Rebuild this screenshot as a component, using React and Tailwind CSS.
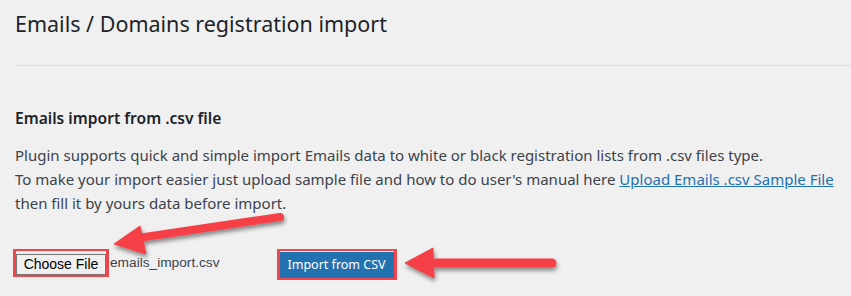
import React from 'react';

const Arrows = () => (
  <svg className="pointer-events-none absolute left-0 top-0" width="851" height="296" viewBox="0 0 851 296">
    <defs>
      <filter id="shadow" x="-20%" y="-50%" width="140%" height="200%">
        <feDropShadow dx="1" dy="3" stdDeviation="2" floodColor="#000" floodOpacity="0.45" />
      </filter>
    </defs>
    <g filter="url(#shadow)" fill="#f54047" stroke="#f54047">
      {/* arrow pointing at the file button */}
      <line x1="280" y1="217" x2="138" y2="238" strokeWidth="8" strokeLinecap="round" />
      <polygon points="114,244 140,226 146,254" strokeWidth="1" strokeLinejoin="round" />
      {/* arrow pointing at the import button */}
      <line x1="552" y1="263" x2="428" y2="263" strokeWidth="9" strokeLinecap="round" />
      <polygon points="405,263 433,248 434,278" strokeWidth="1" strokeLinejoin="round" />
    </g>
  </svg>
);

const App = () => {
  return (
    <div className="relative h-[296px] w-[851px] overflow-hidden bg-[#f0f0f1] font-['Noto_Sans',sans-serif] text-[#3c434a]">
      <div className="pl-[15px]">
        <h1 className="pt-[9px] text-[21.5px] leading-[29px] font-normal text-[#1d2327]">
          Emails / Domains registration import
        </h1>
        <div className="mt-[27px] h-px bg-[#dcdcde]" />

        <h2 className="mt-[42px] text-[15.6px] leading-[20px] font-semibold text-[#1d2327]">
          Emails import from .csv file
        </h2>

        <p className="mt-[15px] text-[15px] leading-[24px]">
          Plugin supports quick and simple import Emails data to white or black registration lists from .csv files type.
          <br />
          To make your import easier just upload sample file and how to do user's manual here{' '}
          <a href="#" className="text-[#2271b1] underline">Upload Emails .csv Sample File</a>
          <br />
          then fill it by yours data before import.
        </p>

        <div className="mt-[34px] flex items-start">
          <div className="-ml-[2px] flex items-center">
            <div className="border-x-[3px] border-y-2 border-[#f0454b]">
              <button className="h-[21px] w-[90px] border border-[#767676] bg-[#efefef] font-['Liberation_Sans',sans-serif] text-[14px] leading-[19px] text-black">
                Choose File
              </button>
            </div>
            <span className="ml-[1px] font-['Liberation_Sans',sans-serif] text-[13.7px] text-[#3c434a]">
              emails_import.csv
            </span>
          </div>
          <div className="ml-[57px] border-x-[3px] border-y-2 border-[#f0454b]">
            <button className="h-[26px] w-[114px] bg-[#2271b1] text-[12.5px] leading-[26px] text-white">
              Import from CSV
            </button>
          </div>
        </div>
      </div>
      <Arrows />
    </div>
  );
};

export default App;
